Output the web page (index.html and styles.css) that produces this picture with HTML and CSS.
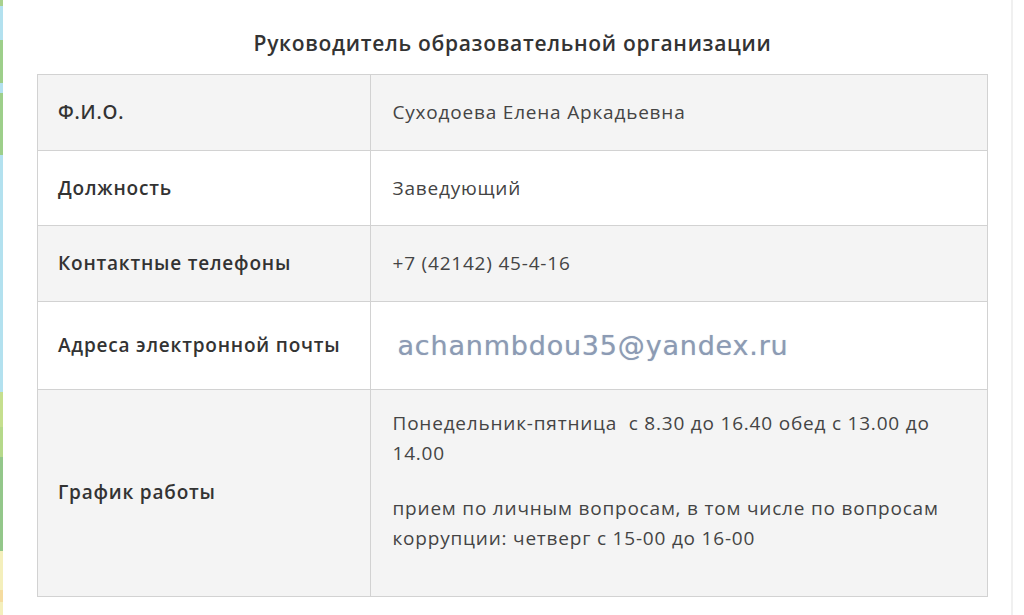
FILE: index.html
```html
<!DOCTYPE html>
<html lang="ru">
<head>
<meta charset="utf-8">
<title>Руководитель образовательной организации</title>
<link rel="stylesheet" href="styles.css">
</head>
<body>
<div class="page">
  <div class="stripe"></div>
  <main class="content">
    <h2 class="title">Руководитель образовательной организации</h2>
    <table class="info">
      <tbody>
        <tr class="row-gray">
          <td class="label">Ф.И.О.</td>
          <td class="value">Суходоева Елена Аркадьевна</td>
        </tr>
        <tr>
          <td class="label">Должность</td>
          <td class="value">Заведующий</td>
        </tr>
        <tr class="row-gray">
          <td class="label">Контактные телефоны</td>
          <td class="value">+7 (42142) 45-4-16</td>
        </tr>
        <tr>
          <td class="label">Адреса электронной почты</td>
          <td class="value"><span class="email">achanmbdou35@yandex.ru</span></td>
        </tr>
        <tr class="row-gray">
          <td class="label">График работы</td>
          <td class="value schedule">
            <p>Понедельник-пятница&nbsp; с 8.30 до 16.40 обед с 13.00 до 14.00</p>
            <p>прием по личным вопросам, в том числе по вопросам коррупции: четверг с 15-00 до 16-00</p>
          </td>
        </tr>
      </tbody>
    </table>
  </main>
  <div class="edge"></div>
  <div class="gutter"></div>
</div>
</body>
</html>
```
FILE: styles.css
```css
* { box-sizing: border-box; }

html, body {
  margin: 0;
  padding: 0;
  background: #ffffff;
}

body {
  font-family: "Open Sans", "Noto Sans", sans-serif;
  color: #3a3a3a;
}

.page {
  display: flex;
  height: 615px;
  overflow: hidden;
}

.stripe {
  width: 3px;
  flex: none;
  background: linear-gradient(to bottom,
    #a9d18e 0, #a9d18e 6px,
    #b3e1ef 6px, #b3e1ef 40px,
    #9dcf8a 40px, #9dcf8a 83px,
    #b3e1ef 83px, #b3e1ef 93px,
    #9dcf8a 93px, #9dcf8a 155px,
    #b3e1ef 155px, #b3e1ef 392px,
    #c5df8e 392px, #c5df8e 427px,
    #b5d98a 427px, #b5d98a 457px,
    #93c78a 457px, #93c78a 551px,
    #f4efbc 551px, #f4efbc 590px,
    #f5dca0 590px, #f5dca0 602px,
    #f4efbc 602px, #f4efbc 615px);
}

.content {
  flex: 1;
  padding: 30px 23px 0 34px;
}

.edge {
  width: 2px;
  flex: none;
  background: #f0f0f0;
}

.gutter {
  width: 11px;
  flex: none;
  background: #ffffff;
}

.title {
  margin: 0 0 18px;
  font-size: 21px;
  line-height: 26px;
  font-weight: 600;
  letter-spacing: 0.7px;
  text-align: center;
  color: #333333;
}

.info {
  width: 100%;
  border-collapse: collapse;
  border: 1px solid #cfcfcf;
  font-size: 19px;
  line-height: 26.6px;
  letter-spacing: 0.8px;
}

.info td {
  border: 1px solid #d2d2d2;
  padding: 24px 20px;
  vertical-align: middle;
}

.row-gray td {
  background: #f4f4f4;
}

.label {
  width: 35%;
  font-weight: 600;
  color: #333333;
}

.info td.value {
  padding-left: 22px;
  color: #444444;
}

.email {
  display: inline-block;
  margin-left: 5px;
  font-family: "DejaVu Sans", "Liberation Sans", sans-serif;
  font-size: 27px;
  line-height: 39px;
  letter-spacing: 0.8px;
  color: #8c9bb4;
  text-shadow: 0 0 1px rgba(140, 155, 180, 0.6);
}

.info td.schedule {
  padding-top: 18px;
}

.schedule p {
  margin: 0 0 25px;
  line-height: 30px;
}

.schedule p:last-child {
  margin-bottom: 19px;
}
```
